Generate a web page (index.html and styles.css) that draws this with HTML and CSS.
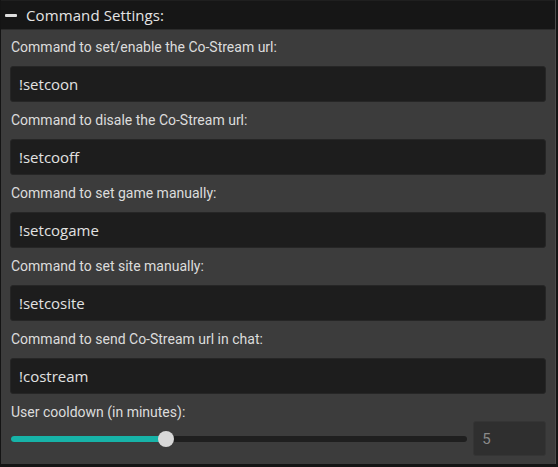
FILE: index.html
```html
<!DOCTYPE html>
<html>
<head>
<meta charset="utf-8">
<link rel="stylesheet" href="styles.css">
</head>
<body>
<div class="panel">
  <div class="header">
    <span class="minus"></span>
    <span class="title">Command Settings:</span>
  </div>
  <div class="content">
    <div class="field">
      <div class="label">Command to set/enable the Co-Stream url:</div>
      <div class="input">!setcoon</div>
    </div>
    <div class="field">
      <div class="label">Command to disale the Co-Stream url:</div>
      <div class="input">!setcooff</div>
    </div>
    <div class="field">
      <div class="label">Command to set game manually:</div>
      <div class="input">!setcogame</div>
    </div>
    <div class="field">
      <div class="label">Command to set site manually:</div>
      <div class="input">!setcosite</div>
    </div>
    <div class="field">
      <div class="label">Command to send Co-Stream url in chat:</div>
      <div class="input">!costream</div>
    </div>
    <div class="field">
      <div class="label">User cooldown (in minutes):</div>
      <div class="slider-row">
        <div class="slider">
          <div class="track"><div class="fill" style="width:155px"></div></div>
          <div class="thumb" style="left:147px"></div>
        </div>
        <div class="number">5</div>
      </div>
    </div>
  </div>
</div>
</body>
</html>
```
FILE: styles.css
```css
html, body {
  margin: 0;
  padding: 0;
  background: #141414;
  width: 558px;
  height: 467px;
  overflow: hidden;
}
.panel {
  margin-left: 1px;
  width: 554px;
  height: 464px;
  background: #3c3c3c;
  border-right: 1px solid #4a4a4a;
  display: flex;
  flex-direction: column;
}
.header {
  height: 28px;
  background: #161616;
  border-top: 1px solid #1f1f1f;
  border-bottom: 1px solid #2c2c2c;
  display: flex;
  align-items: center;
  padding-left: 4px;
  gap: 9px;
}
.minus {
  width: 12px;
  height: 3px;
  background: #dedede;
  border-radius: 1px;
}
.title {
  font-family: "Open Sans", sans-serif;
  font-size: 15px;
  color: #e4e4e4;
  letter-spacing: 0.1px;
}
.content {
  padding: 7px 9px 0 9px;
  display: flex;
  flex-direction: column;
  gap: 8px;
}
.field {
  display: flex;
  flex-direction: column;
  gap: 9px;
}
.label {
  font-family: Roboto, sans-serif;
  font-size: 14px;
  line-height: 20px;
  color: #dcdcdc;
  padding-left: 1px;
}
.input {
  height: 34px;
  background: #1d1d1d;
  border: 1px solid #262626;
  border-radius: 3px;
  font-family: "Open Sans", sans-serif;
  font-size: 15px;
  color: #e2e2e2;
  display: flex;
  align-items: center;
  padding-left: 8px;
}
.slider-row {
  display: flex;
  align-items: center;
  gap: 6px;
  margin-top: -10px;
}
.slider {
  position: relative;
  width: 458px;
  height: 35px;
  display: flex;
  align-items: center;
  margin-left: 1px;
}
.track {
  width: 100%;
  height: 6px;
  background: #1f1f1f;
  border-radius: 3px;
  overflow: hidden;
}
.fill {
  height: 100%;
  background: #17b3a8;
}
.thumb {
  position: absolute;
  top: 10px;
  width: 16px;
  height: 16px;
  border-radius: 50%;
  background: #d8d8d8;
}
.number {
  width: 63px;
  height: 33px;
  background: #2f2f2f;
  border: 1px solid #353535;
  border-radius: 3px;
  font-family: Roboto, sans-serif;
  font-size: 15px;
  color: #8a8a8a;
  display: flex;
  align-items: center;
  padding-left: 8px;
}
```
